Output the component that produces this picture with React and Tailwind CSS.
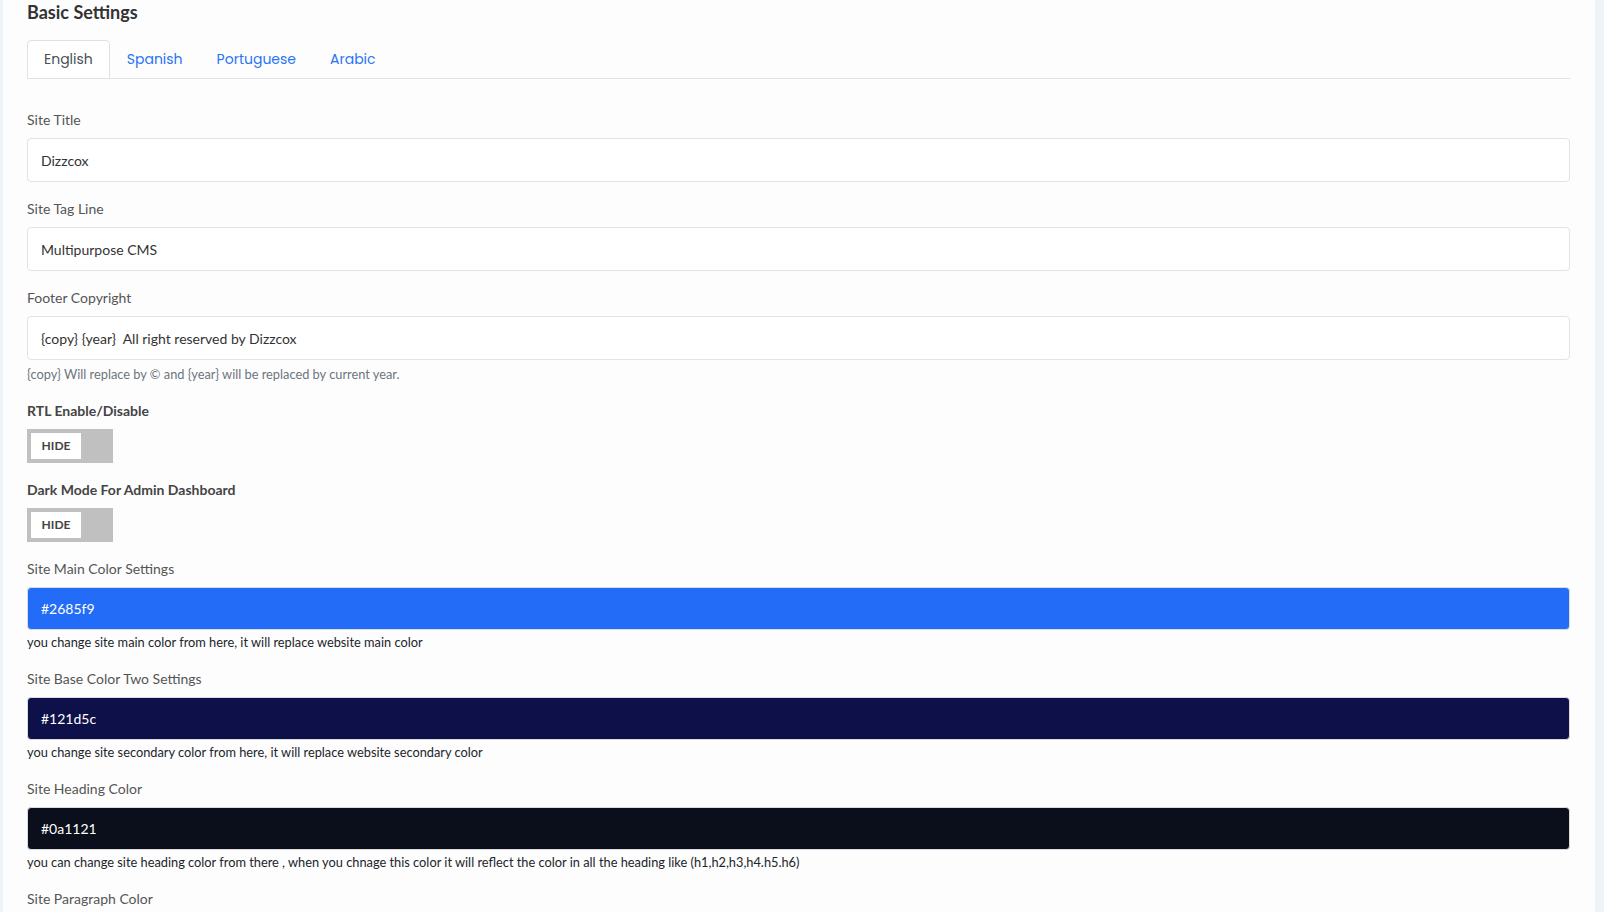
import { useState } from "react";

const tabs = ["English", "Spanish", "Portuguese", "Arabic"];

function Label({ children, bold }) {
  return (
    <label
      className={`block text-[14px] leading-[22px] mb-[7px] ${
        bold ? "font-bold text-[#444]" : "text-[#555]"
      }`}
    >
      {children}
    </label>
  );
}

function TextField({ label, value, help }) {
  return (
    <div className="mb-4">
      <Label>{label}</Label>
      <input
        readOnly
        value={value}
        className="block w-full h-[44px] px-[13px] bg-white border border-[#e3e3e3] rounded-[4px] text-[14px] text-[#333] outline-none"
      />
      {help && (
        <p className="mt-[5px] text-[12.8px] leading-[19px] text-[#6c757d]">{help}</p>
      )}
    </div>
  );
}

function Toggle({ label }) {
  const [on, setOn] = useState(false);
  return (
    <div className="mb-4">
      <Label bold>{label}</Label>
      <button
        onClick={() => setOn(!on)}
        className="flex w-[86px] h-[34px] p-1 bg-[#c0c0c0]"
      >
        <span className="flex items-center justify-center w-[50px] h-[26px] bg-white text-[12px] font-bold text-[#444]">
          {on ? "SHOW" : "HIDE"}
        </span>
      </button>
    </div>
  );
}

function ColorField({ label, value, bg, help }) {
  return (
    <div className="mb-4">
      <Label>{label}</Label>
      <input
        readOnly
        value={value}
        className={`block w-full h-[43px] px-[13px] border border-[#dcdcdc] rounded-[4px] text-[14px] text-white outline-none ${bg}`}
      />
      {help && (
        <p className="mt-[2px] text-[12.8px] leading-[20px] text-[#212529]">{help}</p>
      )}
    </div>
  );
}

export default function App() {
  const [active, setActive] = useState("English");

  return (
    <div
      className="h-screen overflow-hidden bg-[#eef3f7] pl-[3px] pr-[9px]"
      style={{ fontFamily: "Lato, 'Open Sans', sans-serif" }}
    >
      <div className="h-full bg-[#fdfdfd] pl-6 pr-[25px]">
        <h4 className="text-[18px] leading-6 font-bold text-[#333]">Basic Settings</h4>

        <div className="flex mt-4 border-b border-[#dee2e6]">
          {tabs.map((t) => (
            <button
              key={t}
              onClick={() => setActive(t)}
              className={`h-[39px] px-4 -mb-px text-[14px] border rounded-t-[4px] ${
                active === t
                  ? "bg-white border-[#dee2e6] text-[#495057]"
                  : "border-transparent text-[#2a74f7]"
              }`}
              style={{ fontFamily: "Poppins, 'Noto Sans', sans-serif" }}
            >
              {t}
            </button>
          ))}
        </div>

        <div className="pt-[30px]">
          <TextField label="Site Title" value="Dizzcox" />
          <TextField label="Site Tag Line" value="Multipurpose CMS" />
          <TextField
            label="Footer Copyright"
            value="{copy} {year}  All right reserved by Dizzcox"
            help="{copy} Will replace by © and {year} will be replaced by current year."
          />
          <Toggle label="RTL Enable/Disable" />
          <Toggle label="Dark Mode For Admin Dashboard" />
          <ColorField
            label="Site Main Color Settings"
            value="#2685f9"
            bg="bg-[#236cf8]"
            help="you change site main color from here, it will replace website main color"
          />
          <ColorField
            label="Site Base Color Two Settings"
            value="#121d5c"
            bg="bg-[#0e1049]"
            help="you change site secondary color from here, it will replace website secondary color"
          />
          <ColorField
            label="Site Heading Color"
            value="#0a1121"
            bg="bg-[#0b0f1b]"
            help="you can change site heading color from there , when you chnage this color it will reflect the color in all the heading like (h1,h2,h3,h4.h5.h6)"
          />
          <ColorField label="Site Paragraph Color" value="#878a95" bg="bg-[#878a95]" />
        </div>
      </div>
    </div>
  );
}
